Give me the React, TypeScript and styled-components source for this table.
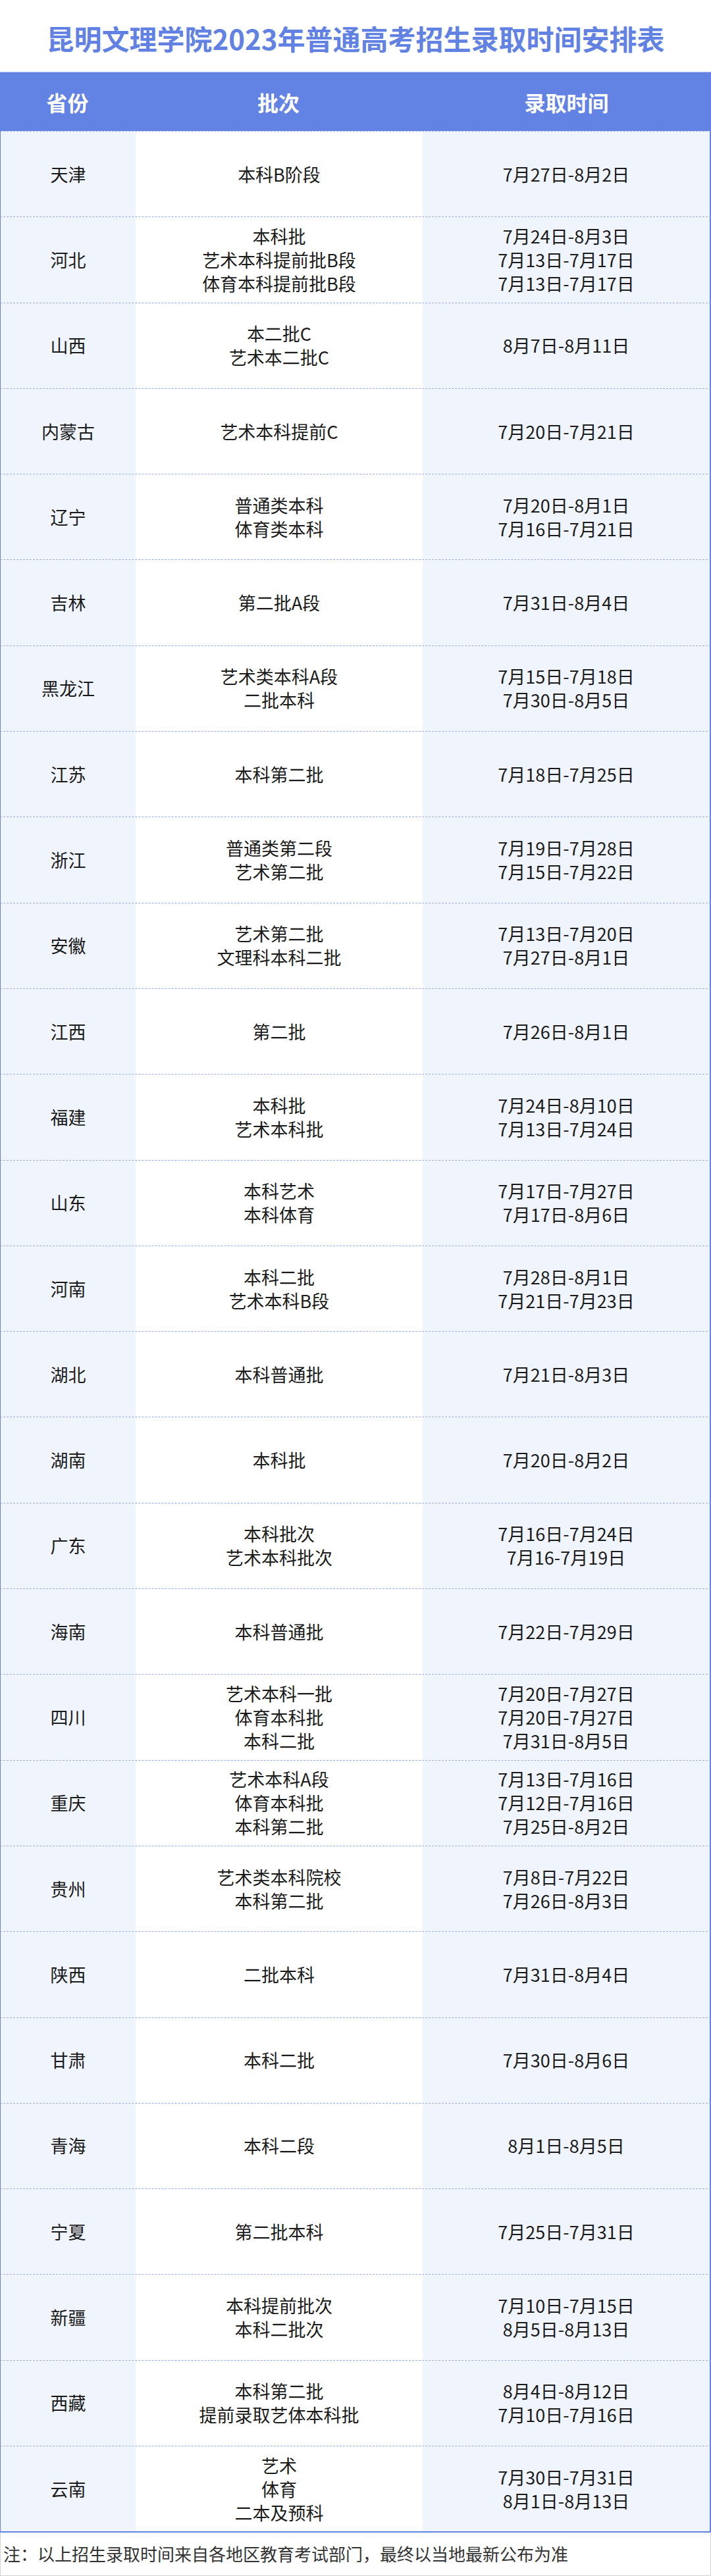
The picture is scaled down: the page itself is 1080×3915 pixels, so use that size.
import React from "react";
import styled, {createGlobalStyle} from "styled-components";

interface IRow {
    province: string
    batches: string[]
    dates: string[]
}

const rows: IRow[] = [
    {province: '天津', batches: ['本科B阶段'], dates: ['7月27日-8月2日']},
    {province: '河北', batches: ['本科批', '艺术本科提前批B段', '体育本科提前批B段'], dates: ['7月24日-8月3日', '7月13日-7月17日', '7月13日-7月17日']},
    {province: '山西', batches: ['本二批C', '艺术本二批C'], dates: ['8月7日-8月11日']},
    {province: '内蒙古', batches: ['艺术本科提前C'], dates: ['7月20日-7月21日']},
    {province: '辽宁', batches: ['普通类本科', '体育类本科'], dates: ['7月20日-8月1日', '7月16日-7月21日']},
    {province: '吉林', batches: ['第二批A段'], dates: ['7月31日-8月4日']},
    {province: '黑龙江', batches: ['艺术类本科A段', '二批本科'], dates: ['7月15日-7月18日', '7月30日-8月5日']},
    {province: '江苏', batches: ['本科第二批'], dates: ['7月18日-7月25日']},
    {province: '浙江', batches: ['普通类第二段', '艺术第二批'], dates: ['7月19日-7月28日', '7月15日-7月22日']},
    {province: '安徽', batches: ['艺术第二批', '文理科本科二批'], dates: ['7月13日-7月20日', '7月27日-8月1日']},
    {province: '江西', batches: ['第二批'], dates: ['7月26日-8月1日']},
    {province: '福建', batches: ['本科批', '艺术本科批'], dates: ['7月24日-8月10日', '7月13日-7月24日']},
    {province: '山东', batches: ['本科艺术', '本科体育'], dates: ['7月17日-7月27日', '7月17日-8月6日']},
    {province: '河南', batches: ['本科二批', '艺术本科B段'], dates: ['7月28日-8月1日', '7月21日-7月23日']},
    {province: '湖北', batches: ['本科普通批'], dates: ['7月21日-8月3日']},
    {province: '湖南', batches: ['本科批'], dates: ['7月20日-8月2日']},
    {province: '广东', batches: ['本科批次', '艺术本科批次'], dates: ['7月16日-7月24日', '7月16-7月19日']},
    {province: '海南', batches: ['本科普通批'], dates: ['7月22日-7月29日']},
    {province: '四川', batches: ['艺术本科一批', '体育本科批', '本科二批'], dates: ['7月20日-7月27日', '7月20日-7月27日', '7月31日-8月5日']},
    {province: '重庆', batches: ['艺术本科A段', '体育本科批', '本科第二批'], dates: ['7月13日-7月16日', '7月12日-7月16日', '7月25日-8月2日']},
    {province: '贵州', batches: ['艺术类本科院校', '本科第二批'], dates: ['7月8日-7月22日', '7月26日-8月3日']},
    {province: '陕西', batches: ['二批本科'], dates: ['7月31日-8月4日']},
    {province: '甘肃', batches: ['本科二批'], dates: ['7月30日-8月6日']},
    {province: '青海', batches: ['本科二段'], dates: ['8月1日-8月5日']},
    {province: '宁夏', batches: ['第二批本科'], dates: ['7月25日-7月31日']},
    {province: '新疆', batches: ['本科提前批次', '本科二批次'], dates: ['7月10日-7月15日', '8月5日-8月13日']},
    {province: '西藏', batches: ['本科第二批', '提前录取艺体本科批'], dates: ['8月4日-8月12日', '7月10日-7月16日']},
    {province: '云南', batches: ['艺术', '体育', '二本及预科'], dates: ['7月30日-7月31日', '8月1日-8月13日']},
]

const App: React.FC = () => {
    return (
        <Page>
            <GlobalStyle/>
            <Title>昆明文理学院2023年普通高考招生录取时间安排表</Title>
            <Table>
                <HeadRow>
                    <HeadCell>省份</HeadCell>
                    <HeadCell>批次</HeadCell>
                    <HeadCell>录取时间</HeadCell>
                </HeadRow>
                {rows.map((row) => (
                    <BodyRow key={row.province}>
                        <Cell $tinted>{row.province}</Cell>
                        <Cell>
                            {row.batches.map((b, i) => <Line key={i}>{b}</Line>)}
                        </Cell>
                        <Cell $tinted>
                            {row.dates.map((d, i) => <Line key={i}>{d}</Line>)}
                        </Cell>
                    </BodyRow>
                ))}
            </Table>
            <Note>注：以上招生录取时间来自各地区教育考试部门，最终以当地最新公布为准</Note>
        </Page>
    )
}

export default App

const GlobalStyle = createGlobalStyle`
  html, body {
    margin: 0;
    padding: 0;
    background: #fff;
  }

  body {
    font-family: "Noto Sans CJK SC", "Noto Sans", sans-serif;
  }
`

const Page = styled.div`
  width: 1080px;
  height: 3915px;
  display: flex;
  flex-direction: column;
  background: #fff;
`

const Title = styled.h1`
  margin: 0;
  height: 109px;
  display: flex;
  align-items: center;
  justify-content: center;
  font-size: 42px;
  font-weight: 700;
  color: #6282e3;
  letter-spacing: 0;
  padding-top: 6px;
  box-sizing: border-box;
`

const Table = styled.div`
  width: 1080px;
  box-sizing: border-box;
  border-bottom: 2px solid #6484e4;
`

const HeadRow = styled.div`
  display: grid;
  grid-template-columns: 205px 436px 1fr;
  height: 90px;
  background: #6383e4;
  border-top: 1px solid #b9c8f4;
  box-sizing: border-box;
`

const HeadCell = styled.div`
  display: flex;
  align-items: center;
  justify-content: center;
  color: #fff;
  font-size: 32px;
  font-weight: 700;
`

const BodyRow = styled.div`
  display: grid;
  grid-template-columns: 205px 436px 1fr;
  height: 130.3px;
  box-sizing: border-box;
  border-top: 1px dashed #94aaee;
  border-left: 1px solid #6484e4;
  border-right: 2px solid #6484e4;
`

const Cell = styled.div<{ $tinted?: boolean }>`
  display: flex;
  flex-direction: column;
  align-items: center;
  justify-content: center;
  background: ${p => p.$tinted ? '#f0f4fd' : '#fff'};
  color: #1a1a1a;
  font-size: 27px;
  line-height: 36px;
`

const Line = styled.div`
  white-space: nowrap;
`

const Note = styled.div`
  flex: 1;
  display: flex;
  align-items: center;
  padding: 0 0 2px 4px;
  box-sizing: border-box;
  border: 1px solid #d2d2d2;
  border-top: 0;
  font-size: 26px;
  color: #333;
`
